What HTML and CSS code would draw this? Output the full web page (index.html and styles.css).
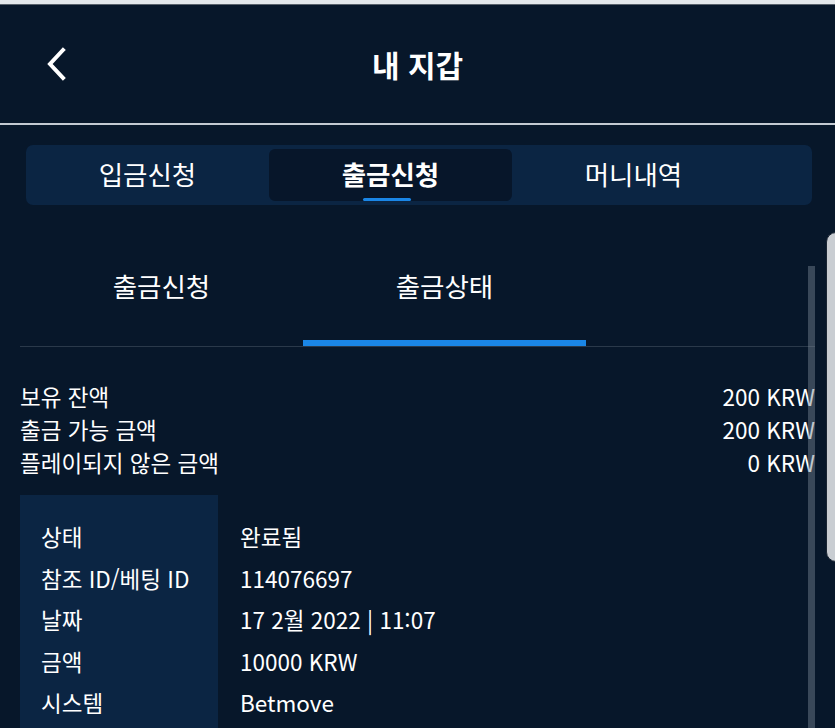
FILE: index.html
```html
<!DOCTYPE html>
<html lang="ko">
<head>
    <meta charset="UTF-8">
    <meta name="viewport" content="width=device-width, initial-scale=1.0">
    <title>내 지갑</title>
    <link rel="stylesheet" href="styles.css">
</head>
<body>
    <div class="topstrip"></div>

    <!-- Header -->
    <header class="header">
        <button type="button" class="back">
            <svg width="22" height="34" viewBox="0 0 22 34">
                <path d="M18 3 L5 17 L18 31" fill="none" stroke="#fff" stroke-width="4" stroke-linecap="square"/>
            </svg>
        </button>
        <h1>내 지갑</h1>
        <div></div>
    </header>

    <div class="content">
        <!-- Main tabs -->
        <nav class="tabs">
            <div class="tab">입금신청</div>
            <div class="tab active">출금신청</div>
            <div class="tab">머니내역</div>
        </nav>

        <!-- Sub tabs -->
        <div class="subtabs">
            <div class="subtab">출금신청</div>
            <div class="subtab active">출금상태</div>
        </div>

        <div class="balances">
            <div class="row"><span>보유 잔액</span><span>200 KRW</span></div>
            <div class="row"><span>출금 가능 금액</span><span>200 KRW</span></div>
            <div class="row"><span>플레이되지 않은 금액</span><span>0 KRW</span></div>
        </div>

        <!-- Withdrawal detail -->
        <div class="details">
            <div class="labels">
                <div>상태</div>
                <div>참조 ID/베팅 ID</div>
                <div>날짜</div>
                <div>금액</div>
                <div>시스템</div>
            </div>
            <div class="values">
                <div>완료됨</div>
                <div>114076697</div>
                <div>17 2월 2022 | 11:07</div>
                <div>10000 KRW</div>
                <div>Betmove</div>
            </div>
        </div>
    </div>

    <div class="scrollbar"></div>
    <div class="edge"></div>
</body>
</html>
```

FILE: styles.css
```css
body {
    margin: 0;
    background-color: #07172a;
    color: #fff;
    font-family: "Noto Sans CJK KR", "Noto Sans", sans-serif;
    overflow: hidden;
    height: 728px;
    position: relative;
}
.topstrip {
    height: 4px;
    background-color: #e4e8ec;
    border-bottom: 1px solid #59626c;
}
.header {
    height: 118px;
    display: grid;
    grid-template-columns: 1fr auto 1fr;
    align-items: center;
    border-bottom: 2px solid #c3cad2;
}
.header h1 {
    margin: 0;
    font-size: 30px;
    font-weight: bold;
}
.back {
    background: none;
    border: none;
    padding: 0 0 0 45px;
    justify-self: start;
    display: flex;
}
.content {
    padding: 20px 20px 0 20px;
}
.tabs {
    margin: 0 3px 0 6px;
    height: 60px;
    box-sizing: border-box;
    padding: 4px 0;
    background-color: #0b2543;
    border-radius: 7px;
    display: flex;
}
.tab {
    width: 243px;
    border-radius: 6px;
    font-size: 26.5px;
    line-height: 50px;
    text-align: center;
    position: relative;
}
.tab.active {
    background-color: #07162a;
    font-weight: bold;
}
.tab.active::after {
    content: "";
    position: absolute;
    left: 94px;
    width: 48px;
    bottom: 0;
    height: 3px;
    border-radius: 2px;
    background-color: #1a86e6;
}
.subtabs {
    margin-top: 25px;
    display: flex;
    border-bottom: 1px solid #2a394a;
}
.subtab {
    width: 283px;
    height: 116px;
    box-sizing: border-box;
    padding-top: 39px;
    line-height: 34px;
    font-size: 26.5px;
    text-align: center;
}
.subtab.active {
    border-bottom: 6px solid #1a86e6;
}
.balances {
    margin-top: 33px;
}
.row {
    display: flex;
    justify-content: space-between;
    font-size: 22.5px;
    line-height: 33px;
}
.details {
    margin-top: 16px;
    display: flex;
    font-size: 22.5px;
    line-height: 41.5px;
}
.labels {
    width: 198px;
    box-sizing: border-box;
    padding: 21px 0 8px 21px;
    background-color: #0b2543;
    white-space: nowrap;
}
.values {
    padding: 21px 0 8px 22px;
}
.scrollbar {
    position: absolute;
    left: 808px;
    top: 266px;
    width: 7px;
    bottom: 0;
    background-color: rgba(120, 132, 146, 0.45);
}
.edge {
    position: absolute;
    left: 826px;
    top: 232px;
    width: 14px;
    height: 328px;
    background-color: #c9cdd2;
    border: 1px solid #1a2533;
    border-radius: 10px 0 0 10px;
}
```
